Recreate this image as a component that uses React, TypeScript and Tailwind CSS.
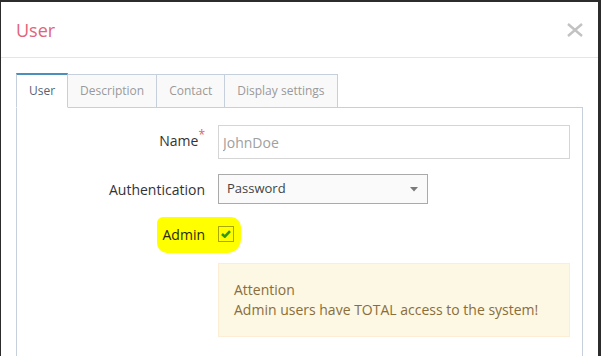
import React from "react";

function Tab({ label, active, first }: { label: string; active?: boolean; first?: boolean }) {
  if (active) {
    return (
      <div
        className={`relative z-10 flex h-[35px] items-center border-x border-t-2 border-b border-x-[#c5d0dc] border-t-[#4c8fbd] border-b-white bg-white px-3 text-[12px] text-[#576373] ${first ? "" : "-ml-px"}`}
      >
        {label}
      </div>
    );
  }
  return (
    <div className="-ml-px flex h-[34px] items-center border border-[#c5d0dc] bg-[#f9f9f9] px-3 text-[12px] text-[#999]">
      {label}
    </div>
  );
}

export default function App() {
  return (
    <div className="h-[356px] w-[601px] overflow-hidden bg-[#2c2c2c] pl-px pt-[2px] font-['Open_Sans',sans-serif]">
      <div className="h-full w-[597px] bg-white">
        {/* header */}
        <div className="flex h-[56px] items-center justify-between border-b border-[#e5e5e5] px-[15px]">
          <div className="text-[18px] leading-[26px] text-[#e2637b]">User</div>
          <svg width="16" height="14" viewBox="0 0 16 14" className="mt-[1px]">
            <path d="M1 1 L15 13 M15 1 L1 13" stroke="#c2c2c2" strokeWidth="2.4" fill="none" />
          </svg>
        </div>

        {/* body */}
        <div className="p-[15px]">
          <div className="relative z-10 -mb-px flex items-end">
            <Tab label="User" active first />
            <Tab label="Description" />
            <Tab label="Contact" />
            <Tab label="Display settings" />
          </div>
          <div className="h-[260px] border border-[#c5d0dc] px-3 pt-[17px]">
            <div className="grid grid-cols-[176px_1fr] gap-x-[13px] gap-y-[15px] text-[14px] text-[#333]">
              {/* Name */}
              <div className="flex items-center justify-end pb-[4px]">
                <span>Name</span>
                <span className="-mt-[10px] text-[12px] text-[#e06262]">*</span>
              </div>
              <input
                readOnly
                placeholder="JohnDoe"
                className="h-[34px] w-full border border-[#d5d5d5] bg-white pl-[4px] text-[14px] text-[#333] outline-none placeholder:text-[#a0a0a0]"
              />

              {/* Authentication */}
              <div className="flex items-center justify-end">Authentication</div>
              <div className="flex h-[30px] w-[210px] items-center justify-between border border-[#aaa] bg-[#fafafa] pl-[8px] pr-[9px] text-[13px] text-[#444]">
                <span>Password</span>
                <svg width="8" height="5" viewBox="0 0 8 5">
                  <path d="M0 0 H8 L4 4.5 Z" fill="#7a7a7a" />
                </svg>
              </div>

              {/* Admin */}
              <div className="relative flex h-[30px] items-center justify-end">
                <div className="absolute left-[128px] top-[-2px] h-[36px] w-[84px] rounded-[10px] rounded-tl-[6px] rounded-br-[14px] bg-[#ffff00]" />
                <span className="relative text-[#2a2a00]">Admin</span>
              </div>
              <div className="relative flex h-[30px] items-center">
                <div className="absolute left-[-13px] top-[-2px] h-[36px] w-[23px] rounded-r-[10px] bg-[#ffff00]" />
                <div className="relative flex h-[16px] w-[16px] items-center justify-center border border-[#a8a800]">
                  <svg width="10" height="8" viewBox="0 0 10 8">
                    <path d="M1 4 L3.8 6.6 L9 1.2" stroke="#2f9a00" strokeWidth="2.6" fill="none" />
                  </svg>
                </div>
              </div>

              {/* Warning */}
              <div />
              <div className="-mt-px border border-[#fbeed5] bg-[#fcf8e3] px-[15px] py-[16px] text-[14px] leading-[20px] text-[#8a6d3b]">
                <div>Attention</div>
                <div>Admin users have TOTAL access to the system!</div>
              </div>
            </div>
          </div>
        </div>
      </div>
    </div>
  );
}
